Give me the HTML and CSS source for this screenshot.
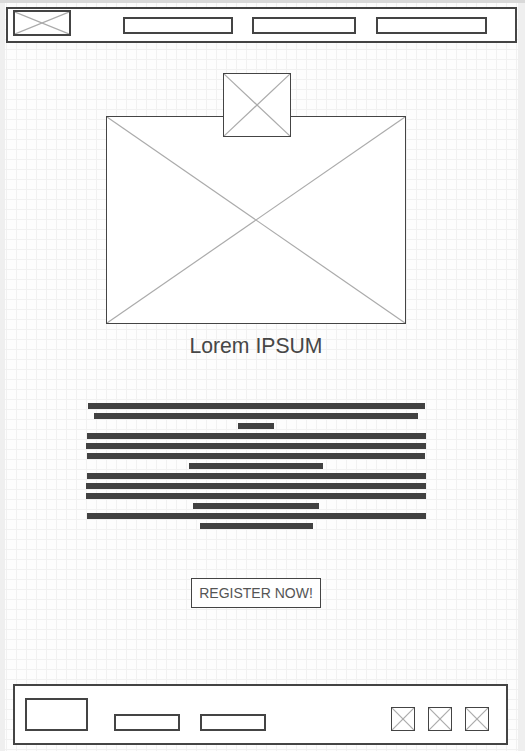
FILE: index.html
```html
<!DOCTYPE html>
<html lang="en">
<head>
<meta charset="utf-8">
<title>Wireframe</title>
<link rel="stylesheet" href="styles.css">
</head>
<body>
<div class="canvas">
  <header class="header">
    <div class="ph logo">
      <svg class="x" viewBox="0 0 100 100" preserveAspectRatio="none"><line x1="0" y1="0" x2="100" y2="100"/><line x1="100" y1="0" x2="0" y2="100"/></svg>
    </div>
    <nav class="nav">
      <div class="nav-item n1"></div>
      <div class="nav-item n2"></div>
      <div class="nav-item n3"></div>
    </nav>
  </header>

  <main class="main">
    <div class="ph thumb">
      <svg class="x" viewBox="0 0 100 100" preserveAspectRatio="none"><line x1="0" y1="0" x2="100" y2="100"/><line x1="100" y1="0" x2="0" y2="100"/></svg>
    </div>
    <div class="ph hero">
      <svg class="x" viewBox="0 0 100 100" preserveAspectRatio="none"><line x1="0" y1="0" x2="100" y2="100"/><line x1="100" y1="0" x2="0" y2="100"/></svg>
    </div>
    <h1 class="title">Lorem IPSUM</h1>
    <div class="lines">
      <span class="bar" style="width:337px"></span>
      <span class="bar" style="width:324px"></span>
      <span class="bar" style="width:36px"></span>
      <span class="bar" style="width:339px"></span>
      <span class="bar" style="width:340px"></span>
      <span class="bar" style="width:338px"></span>
      <span class="bar" style="width:134px"></span>
      <span class="bar" style="width:339px"></span>
      <span class="bar" style="width:340px"></span>
      <span class="bar" style="width:340px"></span>
      <span class="bar" style="width:126px"></span>
      <span class="bar" style="width:339px"></span>
      <span class="bar" style="width:113px"></span>
    </div>
    <button class="cta" type="button">REGISTER NOW!</button>
  </main>

  <footer class="footer">
    <div class="f-box"></div>
    <div class="f-link"></div>
    <div class="f-link f-link2"></div>
    <div class="socials">
      <div class="ph icon"><svg class="x" viewBox="0 0 100 100" preserveAspectRatio="none"><line x1="0" y1="0" x2="100" y2="100"/><line x1="100" y1="0" x2="0" y2="100"/></svg></div>
      <div class="ph icon"><svg class="x" viewBox="0 0 100 100" preserveAspectRatio="none"><line x1="0" y1="0" x2="100" y2="100"/><line x1="100" y1="0" x2="0" y2="100"/></svg></div>
      <div class="ph icon"><svg class="x" viewBox="0 0 100 100" preserveAspectRatio="none"><line x1="0" y1="0" x2="100" y2="100"/><line x1="100" y1="0" x2="0" y2="100"/></svg></div>
    </div>
  </footer>
</div>
</body>
</html>
```

FILE: styles.css
```css
* { box-sizing: border-box; }

html, body {
  margin: 0;
  padding: 0;
}

body {
  background: #efefef;
  border-top: 3px solid #d9d9d9;
  font-family: "Liberation Sans", Arial, sans-serif;
  height: 751px;
  overflow: hidden;
}

.canvas {
  margin: 0 7px 0 5px;
  height: 748px;
  padding-top: 4px;
  background-color: #fdfdfd;
  background-image:
    linear-gradient(#f1f1f1 1px, transparent 1px),
    linear-gradient(90deg, #f1f1f1 1px, transparent 1px);
  background-size: 10px 10px;
  background-position: 1px 6px;
}

/* placeholder image box */
.ph {
  position: relative;
  background: #ffffff;
  border: 1.5px solid #444;
}
.x {
  display: block;
  width: 100%;
  height: 100%;
}
.x line {
  stroke: #ababab;
  stroke-width: 1.2;
  vector-effect: non-scaling-stroke;
}

/* header */
.header {
  margin-left: 1px;
  width: 511px;
  height: 36px;
  border: 2px solid #444;
  background: #fff;
  display: flex;
  align-items: flex-start;
  padding: 1px 0 0 5px;
}
.logo {
  width: 58px;
  height: 26px;
  border-width: 2px;
}
.nav {
  display: flex;
  margin-left: 52px;
  margin-top: 7px;
}
.nav-item {
  height: 17px;
  border: 2px solid #444;
  background: #fff;
}
.n1 { width: 110px; }
.n2 { width: 104px; margin-left: 19px; }
.n3 { width: 111px; margin-left: 20px; }

/* main */
.main {
  display: flex;
  flex-direction: column;
  align-items: center;
  padding-right: 11px;
}
.thumb {
  width: 68px;
  height: 64px;
  margin-top: 30px;
  margin-bottom: -21px;
  margin-left: 1px;
  z-index: 1;
}
.hero {
  width: 300px;
  height: 208px;
}
.title {
  margin: 9px 0 0;
  font-weight: normal;
  font-size: 21.2px;
  line-height: 26px;
  color: #474747;
}
.lines {
  margin-top: 44px;
  display: flex;
  flex-direction: column;
  align-items: center;
  gap: 4px;
}
.bar {
  display: block;
  height: 6px;
  background: #414141;
}
.cta {
  margin-top: 49px;
  width: 130px;
  height: 30px;
  padding: 0;
  border: 1.5px solid #444;
  background: #fff;
  color: #555;
  font-family: "Liberation Sans", Arial, sans-serif;
  font-size: 14px;
}

/* footer */
.footer {
  margin: 76px 0 0 8px;
  width: 495px;
  height: 61px;
  border: 2px solid #444;
  background: #fff;
  display: flex;
  align-items: flex-end;
  padding: 0 17px 12px 10px;
}
.f-box {
  width: 63px;
  height: 33px;
  border: 2px solid #444;
}
.f-link {
  width: 66px;
  height: 17px;
  border: 2px solid #444;
  margin-left: 26px;
}
.f-link2 { margin-left: 20px; }
.socials {
  margin-left: auto;
  display: flex;
  gap: 13px;
}
.icon {
  width: 24px;
  height: 24px;
}
```
